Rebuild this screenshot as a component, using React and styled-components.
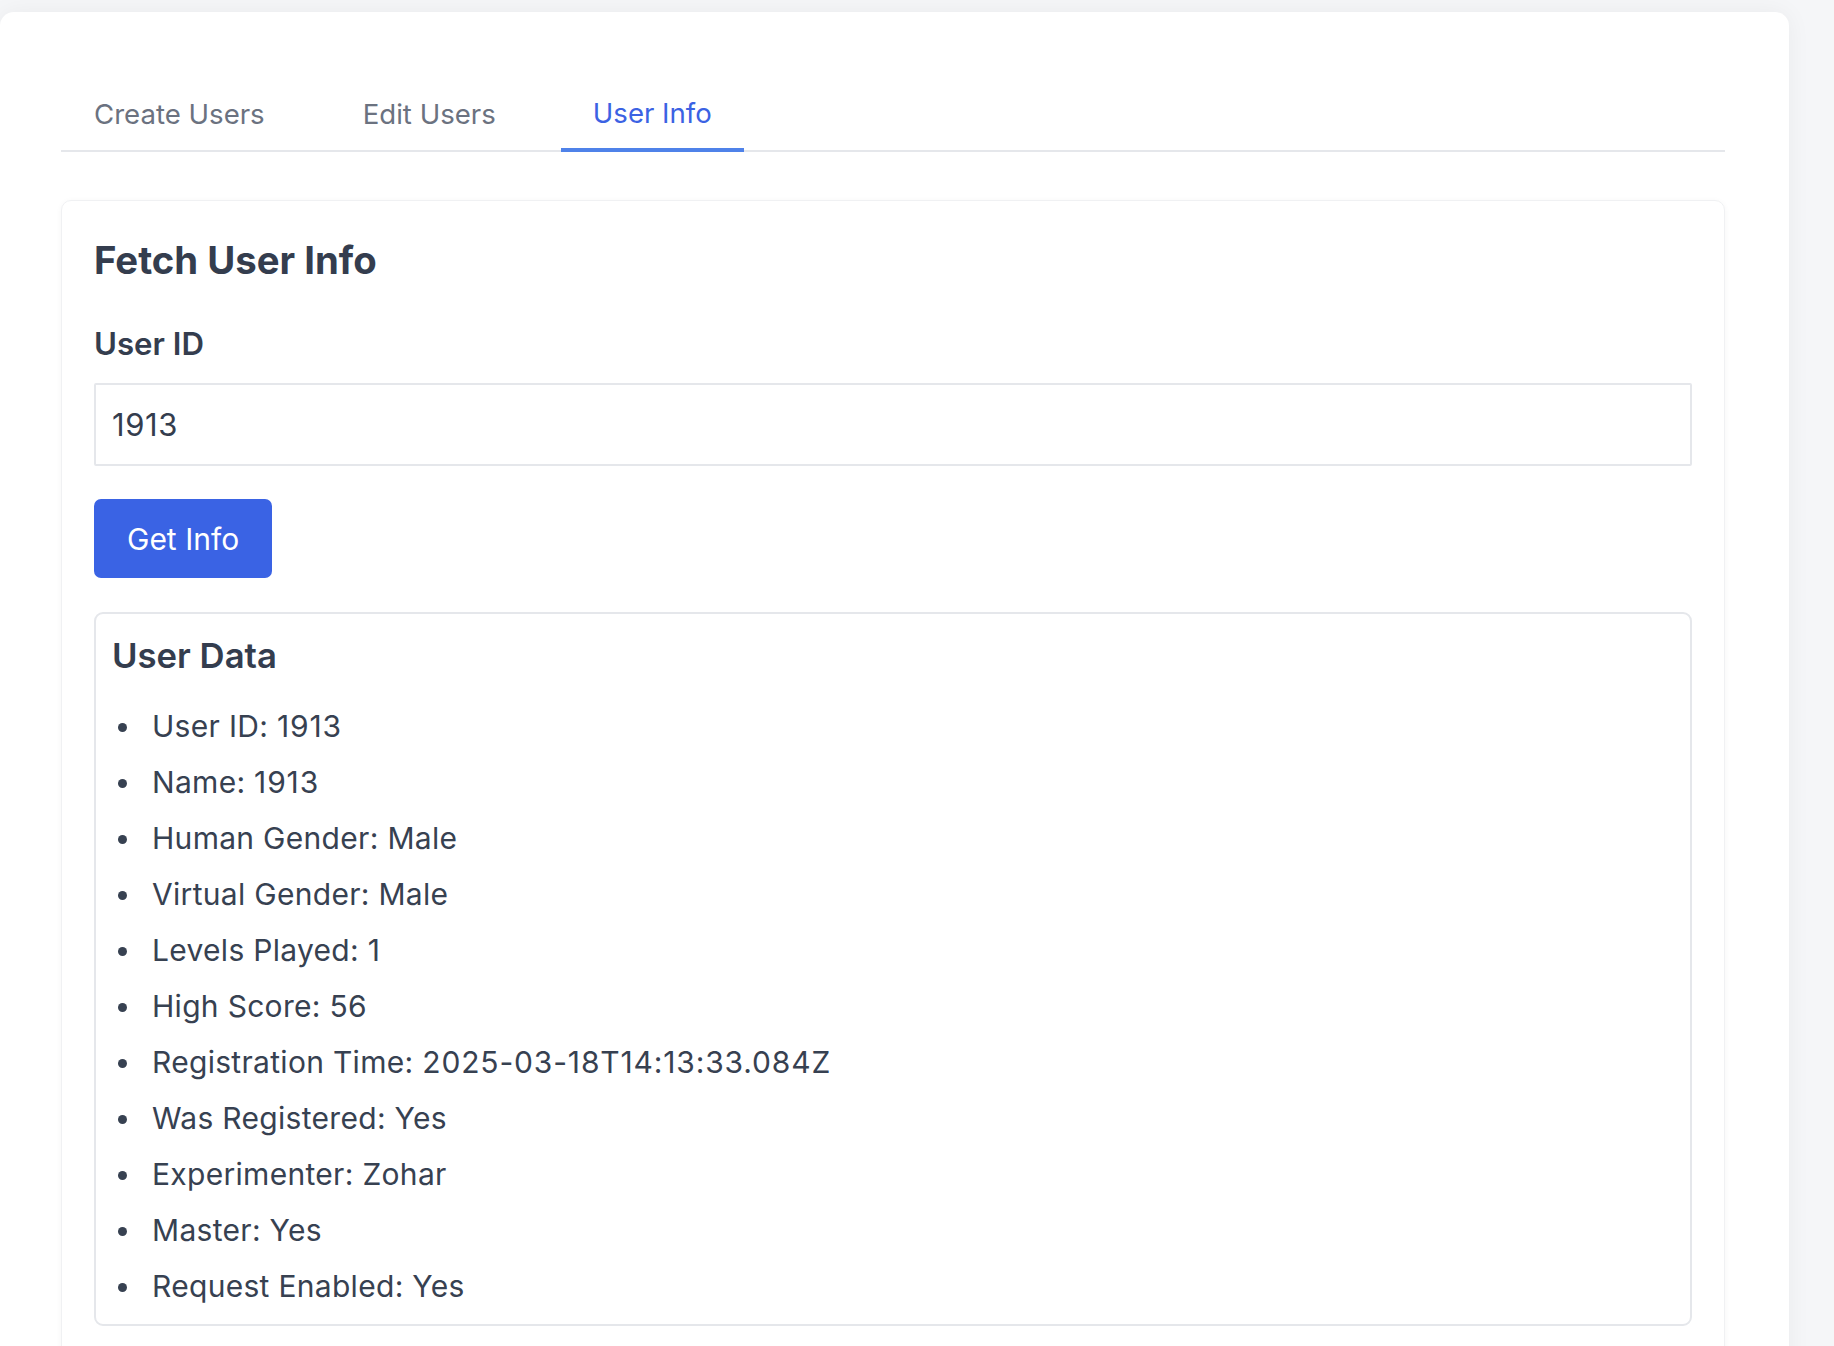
import React, { useState } from 'react';
import styled, { createGlobalStyle } from 'styled-components';

const GlobalStyle = createGlobalStyle`
  body {
    margin: 0;
    background: #f5f6f8;
    font-family: Inter, "Noto Sans", sans-serif;
    color: #374151;
  }
`;

const Page = styled.div`
  padding-top: 12px;
  min-height: 1334px;
`;

const Panel = styled.div`
  width: 1789px;
  box-sizing: border-box;
  background: #ffffff;
  border-radius: 14px;
  box-shadow: 0 0 24px rgba(15, 23, 42, 0.05);
  padding: 66px 64px 0 61px;
  min-height: 1400px;
`;

const TabList = styled.div`
  display: flex;
  gap: 32px;
  border-bottom: 2px solid #e5e7eb;
`;

const Tab = styled.button`
  background: none;
  border: none;
  border-bottom: 4px solid ${props => props.active ? "#4f82e9" : "transparent"};
  margin-bottom: -2px;
  padding: ${props => props.active ? "14px 32px 14px" : "15px 33px 13px"};
  font-family: Inter, "Noto Sans", sans-serif;
  font-size: 27.6px;
  line-height: 42px;
  color: ${props => props.active ? "#3b62e3" : "#6b7280"};
  cursor: pointer;
`;

const Card = styled.div`
  margin-top: 48px;
  border: 1px solid #f0f1f3;
  border-radius: 10px;
  box-shadow: 0 1px 6px rgba(15, 23, 42, 0.04);
  padding: 32px;
  min-height: 1200px;
`;

const Title = styled.h2`
  margin: 0;
  font-size: 38.3px;
  line-height: 54px;
  font-weight: 700;
  color: #343d4e;
`;

const Label = styled.label`
  display: block;
  margin-top: 35px;
  font-size: 31.2px;
  line-height: 45px;
  font-weight: 600;
  color: #343d4e;
`;

const Input = styled.input`
  display: block;
  margin-top: 16px;
  width: 100%;
  height: 83px;
  box-sizing: border-box;
  border: 2px solid #e5e7eb;
  border-radius: 2px;
  padding: 0 16px;
  font-family: Inter, "Noto Sans", sans-serif;
  font-size: 31px;
  letter-spacing: 0.6px;
  color: #343d4e;
  outline: none;
`;

const Button = styled.button`
  display: block;
  margin-top: 33px;
  height: 79px;
  padding: 0 33px;
  background: #3a63e4;
  border: none;
  border-radius: 7px;
  font-family: Inter, "Noto Sans", sans-serif;
  font-size: 30px;
  color: #ffffff;
  cursor: pointer;
`;

const DataBox = styled.div`
  margin-top: 34px;
  border: 2px solid #e5e7eb;
  border-radius: 9px;
  padding: 16px 16px 10px;
`;

const DataTitle = styled.h3`
  margin: 0;
  font-size: 34.7px;
  line-height: 51px;
  font-weight: 600;
  color: #343d4e;
`;

const List = styled.ul`
  margin: 17px 0 0;
  padding: 0;
  list-style: none;
`;

const Item = styled.li`
  display: flex;
  align-items: center;
  font-size: 30px;
  line-height: 56px;
  letter-spacing: 0.3px;
  color: #374151;
  white-space: pre;

  &::before {
    content: "";
    flex: none;
    width: 9px;
    height: 9px;
    border-radius: 50%;
    background: #374151;
    margin: 2px 25px 0 6px;
  }
`;

const Value = styled.span`
  letter-spacing: ${props => props.numeric ? "0.85px" : "0.3px"};
`;

const tabs = ["Create Users", "Edit Users", "User Info"];

const userData = [
  ["User ID", "1913"],
  ["Name", "1913"],
  ["Human Gender", "Male"],
  ["Virtual Gender", "Male"],
  ["Levels Played", "1"],
  ["High Score", "56"],
  ["Registration Time", "2025-03-18T14:13:33.084Z"],
  ["Was Registered", "Yes"],
  ["Experimenter", "Zohar"],
  ["Master", "Yes"],
  ["Request Enabled", "Yes"],
];

export default function App() {
  const [activeTab, setActiveTab] = useState("User Info");
  const [userId, setUserId] = useState("1913");

  return (
    <>
      <GlobalStyle />
      <Page>
        <Panel>
          <TabList>
            {tabs.map(t => (
              <Tab key={t} active={t === activeTab} onClick={() => setActiveTab(t)}>
                {t}
              </Tab>
            ))}
          </TabList>
          <Card>
            <Title>Fetch User Info</Title>
            <Label htmlFor="userId">User ID</Label>
            <Input id="userId" value={userId} onChange={e => setUserId(e.target.value)} />
            <Button>Get Info</Button>
            <DataBox>
              <DataTitle>User Data</DataTitle>
              <List>
                {userData.map(([k, v]) => (
                  <Item key={k}>
                    {k}: <Value numeric={v.length > 2 && /\d/.test(v)}>{v}</Value>
                  </Item>
                ))}
              </List>
            </DataBox>
          </Card>
        </Panel>
      </Page>
    </>
  );
}
